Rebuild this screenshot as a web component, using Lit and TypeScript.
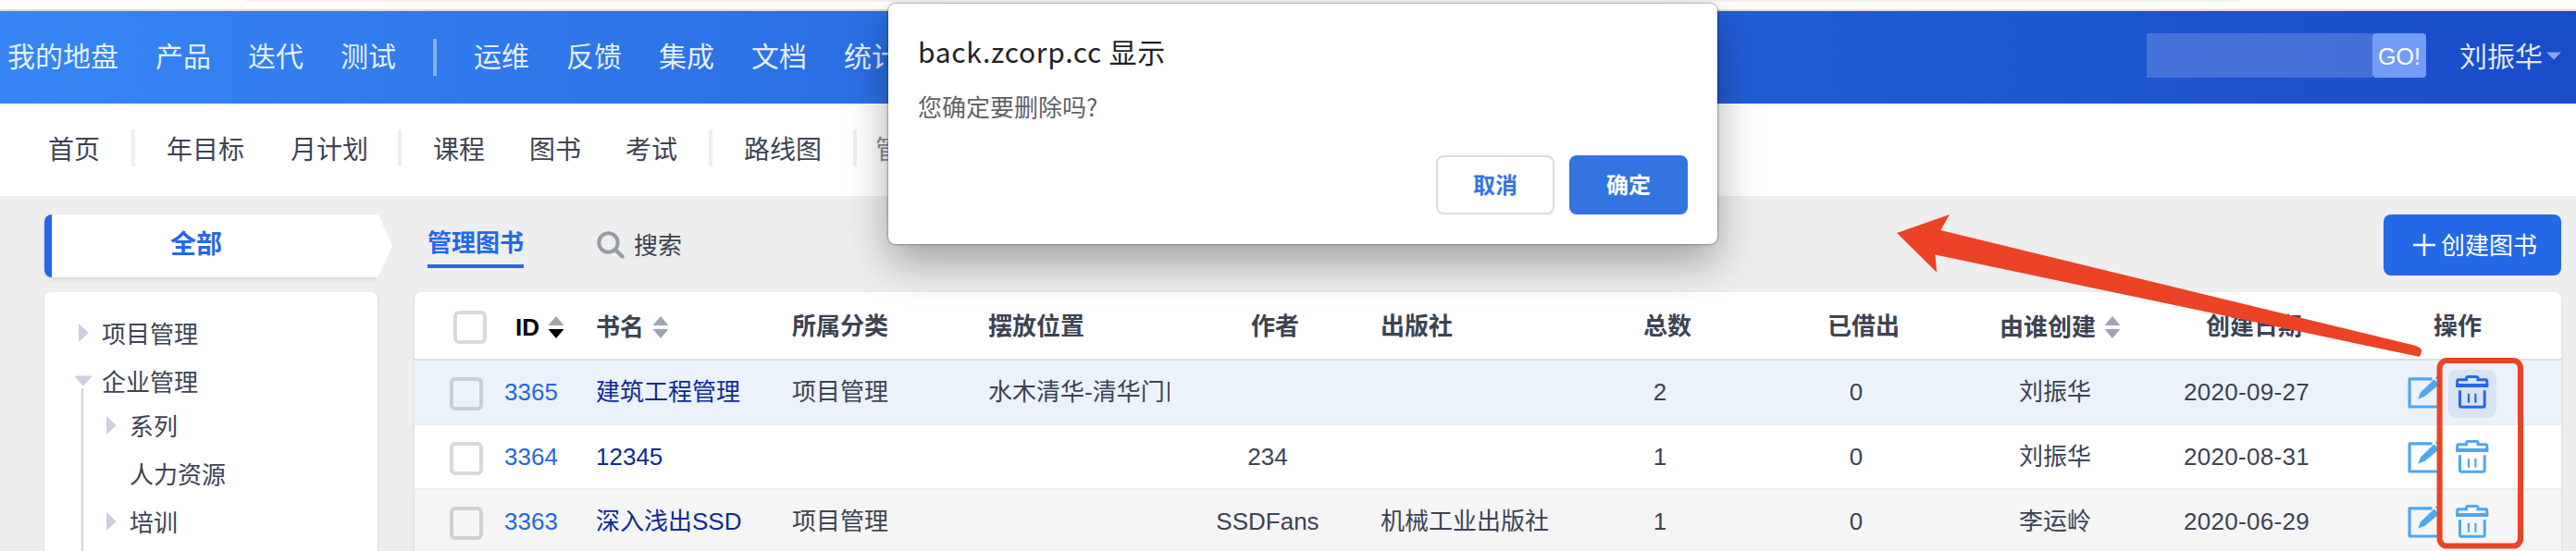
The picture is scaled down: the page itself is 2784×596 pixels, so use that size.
import { LitElement, html, css, svg, nothing } from "lit";
import { customElement } from "lit/decorators.js";
import { classMap } from "lit/directives/class-map.js";

interface Book {
  id: string;
  name: string;
  category: string;
  place: string;
  author: string;
  publisher: string;
  total: number;
  lent: number;
  creator: string;
  date: string;
  active?: boolean;
}

const BOOKS: Book[] = [
  { id: "3365", name: "建筑工程管理", category: "项目管理", place: "水木清华-清华门口", author: "", publisher: "", total: 2, lent: 0, creator: "刘振华", date: "2020-09-27", active: true },
  { id: "3364", name: "12345", category: "", place: "", author: "234", publisher: "", total: 1, lent: 0, creator: "刘振华", date: "2020-08-31" },
  { id: "3363", name: "深入浅出SSD", category: "项目管理", place: "", author: "SSDFans", publisher: "机械工业出版社", total: 1, lent: 0, creator: "李运岭", date: "2020-06-29" },
];

const sortIcon = (desc = false) => html`
  <svg class="sort" width="18" height="24" viewBox="0 0 18 24">
    <path d="M9 0 17.5 10H0.5Z" fill="#a0a4ae" />
    <path d="M9 24 17.5 14H0.5Z" fill=${desc ? "#000" : "#a0a4ae"} />
  </svg>`;

const editIcon = html`
  <svg class="edit" width="34" height="36" viewBox="0 0 34 36">
    <path d="M26.5 2.8H2.1V33H34" fill="none" stroke="#4ca8f2" stroke-width="3.2" stroke-linejoin="round" />
    <path d="M11.2 24.8 14 17.6 28.5 3.4 34 8.2V9L18.6 21.8Z" fill="#4ca8f2" />
    <path d="M30 1.8 34-2V5.4Z" fill="#4ca8f2" />
  </svg>`;

const trashIcon = svg`
  <path d="M9.7 17V12.2q0-1.4 1.4-1.4H19.6V9q0-1.5 1.5-1.5h9.4q1.5 0 1.5 1.5V10.8H40.4q1.4 0 1.4 1.4V17Z" fill="none" stroke="currentColor" stroke-width="3" />
  <path d="M8.2 15h35v4h-35Z" fill="currentColor" />
  <path d="M12.5 22.3V38.4q0 1.8 1.8 1.8H37.4q1.8 0 1.8-1.8V22.3" fill="none" stroke="currentColor" stroke-width="3" />
  <path d="M22 25.7v10M29.4 25.7v10" stroke="currentColor" stroke-width="2.2" />`;

@customElement("book-table")
class BookTable extends LitElement {
  static styles = css`
    :host { display: block; background: #fff; border-radius: 8px 8px 0 0; box-shadow: 0 2px 4px rgba(0, 0, 0, 0.1); overflow: hidden; }
    .row {
      display: grid;
      grid-template-columns: 196px 212px 212px 196px 212px 212px 212px 212px 218px 196px 242px;
      height: 70px; box-sizing: border-box; border-bottom: 2px solid #ededed;
      font-size: 26px; line-height: 38px; color: #3c4353; align-items: center; white-space: nowrap;
    }
    .head { height: 74px; padding-top: 2px; border-bottom-color: #ddd; font-weight: 700; }
    .active { background: #ebf2fa; border-bottom-color: #ededee; }
    .striped { background: #f5f5f5; }
    .id, .with-sort, .ops { display: flex; align-items: center; }
    .id { padding-left: 38px; color: #2468e2; }
    .id .label { margin-left: 23px; }
    .head .id { padding-left: 42px; padding-top: 2px; color: #000; }
    .head .id .label { margin-left: 31px; }
    .head .with-sort { padding-top: 2px; }
    .box { width: 36px; height: 36px; margin-top: 4px; box-sizing: border-box; border: 4px solid rgba(0, 0, 0, 0.15); border-radius: 6px; }
    .head .box { margin-top: 0; }
    .sort { display: block; margin-left: 9px; }
    .name { color: #0c2a94; }
    .head .name { color: inherit; }
    .center { text-align: center; }
    .head .center { padding-left: 16px; }
    .head .creator { justify-content: center; padding-left: 11px; }
    .publisher { padding-left: 16px; }
    .place { overflow: hidden; }
    .date { letter-spacing: 0.3px; }
    .ops { padding-left: 76px; gap: 10px; }
    .head .ops { padding-left: 104px; }
    .edit { display: block; margin-top: 2px; }
    .trash { width: 52px; height: 52px; margin-top: 4px; border-radius: 8px; color: #4ca8f2; }
    .active .trash { background: #d8e4f4; color: #2468e8; }
    .trash svg { display: block; }
  `;

  render() {
    return html`
      <div class="row head">
        <div class="id"><span class="box"></span><span class="label">ID</span>${sortIcon(true)}</div>
        <div class="name with-sort">书名${sortIcon()}</div>
        <div>所属分类</div>
        <div>摆放位置</div>
        <div class="center">作者</div>
        <div class="publisher">出版社</div>
        <div class="center">总数</div>
        <div class="center">已借出</div>
        <div class="center with-sort creator">由谁创建${sortIcon()}</div>
        <div class="center">创建日期</div>
        <div class="ops">操作</div>
      </div>
      ${BOOKS.map((b, i) => html`
        <div class=${classMap({ row: true, active: !!b.active, striped: i === 2 })}>
          <div class="id"><span class="box"></span><span class="label">${b.id}</span></div>
          <div class="name">${b.name}</div>
          <div>${b.category}</div>
          <div class="place">${b.place}</div>
          <div class="center">${b.author}</div>
          <div class="publisher">${b.publisher}</div>
          <div class="center">${b.total}</div>
          <div class="center">${b.lent}</div>
          <div class="center">${b.creator}</div>
          <div class="center date">${b.date}</div>
          <div class="ops">${editIcon}<span class="trash"><svg width="52" height="52" viewBox="0 0 52 52">${trashIcon}</svg></span></div>
        </div>`)}
    `;
  }
}

@customElement("confirm-dialog")
class ConfirmDialog extends LitElement {
  static styles = css`
    :host {
      display: block; box-sizing: border-box; width: 896px; height: 260px; padding: 29px 32px 32px;
      background: #fff; border-radius: 8px;
      box-shadow: 0 0 2px 1px rgba(0, 0, 0, 0.3), 0 20px 46px rgba(0, 0, 0, 0.32);
      font-family: "Noto Sans CJK SC", sans-serif;
    }
    .title { font-size: 30px; line-height: 44px; color: #202124; letter-spacing: 0.7px; }
    .message { margin-top: 19px; font-size: 26px; line-height: 38px; color: #5f6368; }
    .buttons { display: flex; justify-content: flex-end; gap: 16px; margin-top: 34px; }
    .button {
      box-sizing: border-box; width: 128px; height: 64px; border-radius: 8px; border: 2px solid #dadce0;
      font-size: 24px; line-height: 58px; font-weight: 700; text-align: center; color: #3374e0; background: #fff;
    }
    .primary { background: #3374e0; border-color: #3374e0; color: #fff; }
  `;

  render() {
    return html`
      <div class="title">back.zcorp.cc 显示</div>
      <div class="message">您确定要删除吗?</div>
      <div class="buttons">
        <div class="button">取消</div>
        <div class="button primary">确定</div>
      </div>`;
  }
}

const TREE = [
  { text: "项目管理", kind: "closed", level: 0 },
  { text: "企业管理", kind: "open", level: 0 },
  { text: "系列", kind: "closed", level: 1 },
  { text: "人力资源", kind: "leaf", level: 1 },
  { text: "培训", kind: "closed", level: 1 },
];

@customElement("app-root")
class AppRoot extends LitElement {
  static styles = css`
    :host {
      display: block; position: relative; width: 2784px; height: 596px; overflow: hidden; background: #eee;
      font-family: "Liberation Sans", "Noto Sans CJK SC", sans-serif; color: #3c4353; white-space: nowrap;
    }
    .chrome { box-sizing: border-box; height: 12px; background: #fff; border-bottom: 2px solid #ddd; padding: 0 364px 0 266px; }
    .address { height: 2px; background: #f1f3f4; border-radius: 0 0 8px 8px; }
    .topbar {
      display: flex; align-items: center; box-sizing: border-box; height: 100px; padding: 0 16px 0 8px;
      background: linear-gradient(90deg, #3785f4, #2b6de3 36%, #1f5ad4 72%, #184dca);
      font-size: 30px; line-height: 44px; color: rgba(255, 255, 255, 0.9);
    }
    .main-nav { display: flex; align-items: center; gap: 40px; flex: 1; }
    .nav-divider { width: 4px; height: 40px; background: rgba(255, 255, 255, 0.42); }
    .search { display: flex; height: 48px; margin: 0 36px 4px 0; }
    .field { width: 244px; background: rgba(255, 255, 255, 0.18); }
    .go { width: 58px; line-height: 51px; border-radius: 4px; background: #739cf6; color: #fff; text-align: center; font-size: 25px; }
    .user { display: flex; align-items: center; gap: 4px; }
    .caret { margin-bottom: 4px; }
    .subbar { display: flex; align-items: center; box-sizing: border-box; height: 100px; padding: 0 52px; background: #fff; font-size: 28px; line-height: 42px; }
    .group { display: flex; gap: 48px; padding-top: 2px; }
    .wide { gap: 50px; margin-right: -2px; }
    .sub-divider { width: 4px; height: 40px; margin: 0 34px 4px; background: #eee; }
    .current { color: #838a9d; margin-left: -14px; padding-top: 2px; }
    .body { display: grid; grid-template-columns: 360px 2320px; column-gap: 40px; row-gap: 16px; padding: 20px 16px 0 48px; grid-template-rows: 68px 280px; }
    .all {
      position: relative; box-sizing: border-box; border-left: 8px solid #2468e8; border-radius: 8px 2px 2px 8px;
      background: #fff; box-shadow: 0 2px 4px rgba(0, 0, 0, 0.1);
      font-size: 28px; line-height: 66px; font-weight: 700; text-align: center; color: #2468e8; padding-right: 40px;
    }
    .tip { position: absolute; left: 352px; top: -2px; }
    .toolbar { display: flex; align-items: flex-start; font-size: 26px; }
    .tab { margin-left: 14px; padding-top: 12px; height: 42px; line-height: 38px; border-bottom: 4px solid #2468e8; color: #2468e8; font-weight: 700; }
    .find { display: flex; align-items: center; gap: 10px; margin-left: 79px; height: 66px; flex: 1; }
    .create { display: flex; align-items: center; justify-content: center; gap: 6px; width: 192px; height: 66px; padding-left: 6px; box-sizing: border-box; border-radius: 8px; background: #2468e8; color: #fff; }
    .caption { padding-bottom: 4px; }
    .tree {
      display: grid; grid-template-rows: 52px 52px 44px 60px 44px; background: #fff; border-radius: 8px 8px 0 0;
      box-shadow: 0 2px 4px rgba(0, 0, 0, 0.1); padding: 18px 32px 0; position: relative; font-size: 26px;
    }
    .node { display: flex; align-items: center; }
    .text { padding-bottom: 1px; }
    .mark { width: 30px; display: flex; }
    .mark svg { display: block; }
    .nested { padding-left: 30px; }
    .guide { position: absolute; left: 40px; top: 104px; bottom: 0; width: 2px; background: #d0d2d6; }
    .dialog { position: absolute; left: 960px; top: 4px; }
    .marks { position: absolute; left: 0; top: 0; }
  `;

  private mark(kind: string) {
    if (kind === "closed") return html`<svg width="30" height="20" viewBox="0 0 30 20"><path d="M5 1.5V18.5Q5 20 6.2 19L15 10.8Q15.6 10 15 9.3L6.2 1Q5 0 5 1.5Z" fill="#cbd0dc" /></svg>`;
    if (kind === "open") return html`<svg width="30" height="12" viewBox="0 0 30 12"><path d="M2 0.5H18Q20 0.5 18.6 2L11 10.5Q10 11.5 9 10.5L1.4 2Q0 0.5 2 0.5Z" fill="#cbd0dc" /></svg>`;
    return nothing;
  }

  render() {
    return html`
      <div class="chrome"><div class="address"></div></div>
      <div class="topbar">
        <div class="main-nav">
          ${["我的地盘", "产品", "迭代", "测试"].map((t) => html`<span>${t}</span>`)}
          <span class="nav-divider"></span>
          ${["运维", "反馈", "集成", "文档", "统计"].map((t) => html`<span>${t}</span>`)}
        </div>
        <div class="search"><div class="field"></div><div class="go">GO!</div></div>
        <div class="user">刘振华<svg class="caret" width="16" height="9" viewBox="0 0 16 9"><path d="M0 0.5H16L8 8.5Z" fill="rgba(255,255,255,.5)" /></svg></div>
      </div>
      <div class="subbar">
        ${[["首页"], ["年目标", "月计划"], ["课程", "图书", "考试"], ["路线图"]].map(
          (g) => html`<div class=${classMap({ group: true, wide: g.length === 2 })}>${g.map((t) => html`<span>${t}</span>`)}</div><span class="sub-divider"></span>`
        )}
        <span class="current">管理</span>
      </div>
      <div class="body">
        <div class="all">全部<svg class="tip" width="16" height="72" viewBox="0 0 16 72"><path d="M0 0 16 36 0 71Z" fill="#fff" /></svg></div>
        <div class="toolbar">
          <span class="tab">管理图书</span>
          <span class="find">
            <svg width="30" height="30" viewBox="0 0 30 30"><circle cx="12.5" cy="12.5" r="10.2" fill="none" stroke="#989ea8" stroke-width="4" /><path d="M20 20 27.5 27.5" stroke="#989ea8" stroke-width="4.4" stroke-linecap="round" /></svg>
            <span class="caption">搜索</span>
          </span>
          <span class="create">
            <svg width="24" height="24" viewBox="0 0 24 24"><path d="M12 0V24M0 12H24" stroke="#fff" stroke-width="2.6" /></svg>
            <span class="caption">创建图书</span>
          </span>
        </div>
        <div class="tree">
          ${TREE.map((n) => html`<div class=${classMap({ node: true, nested: n.level === 1 })}><span class="mark">${this.mark(n.kind)}</span><span class="text">${n.text}</span></div>`)}
          <span class="guide"></span>
        </div>
        <book-table></book-table>
      </div>
      <confirm-dialog class="dialog"></confirm-dialog>
      <svg class="marks" width="2784" height="596" viewBox="0 0 2784 596">
        <path d="M2050 252 2107 232 2097.3 249 2608 373.2Q2618 376 2617 380Q2616 386.5 2613 385.6L2091.5 275.5 2093 294.5Z" fill="#ec4226" />
        <rect x="2636.6" y="390" width="87.4" height="200.6" rx="8" fill="none" stroke="#ec4226" stroke-width="6" />
      </svg>
    `;
  }
}
